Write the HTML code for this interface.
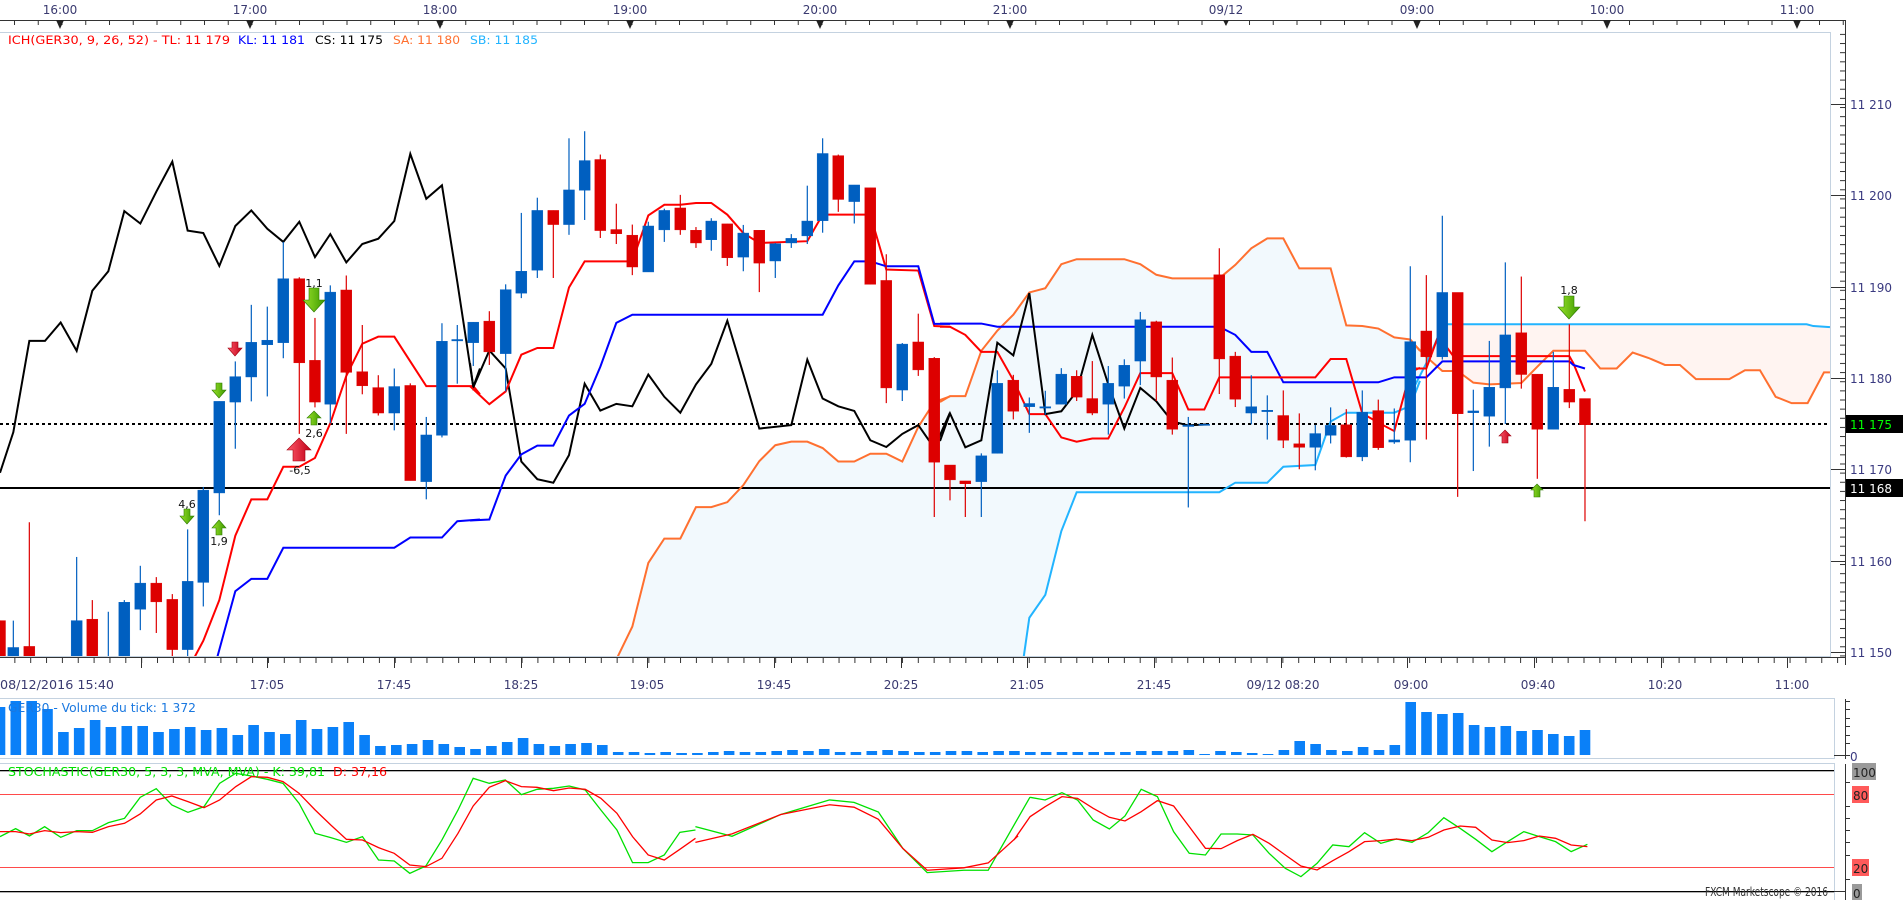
<!DOCTYPE html>
<html><head><meta charset="utf-8"><style>
html,body{margin:0;padding:0;background:#fff;}
svg{display:block;}
text{font-family:"DejaVu Sans","Liberation Sans",sans-serif;}
.ns{vector-effect:non-scaling-stroke;}
</style></head><body>
<svg width="1903" height="900" viewBox="0 0 1903 900" xmlns="http://www.w3.org/2000/svg">
<defs>
<pattern id="tt" x="14" y="0" width="23.75" height="900" patternUnits="userSpaceOnUse"><rect x="0" y="20" width="1" height="5" fill="#333"/></pattern>
<pattern id="bt" x="-1.5" y="0" width="15.85" height="900" patternUnits="userSpaceOnUse"><rect x="0" y="657" width="1" height="6" fill="#333"/></pattern>
<pattern id="rt" x="0" y="-2.66" width="20" height="9.14" patternUnits="userSpaceOnUse"><rect x="0" y="0" width="8" height="1" fill="#333"/></pattern>
<clipPath id="pc"><rect x="0" y="32" width="1830" height="625"/></clipPath>
<linearGradient id="gg" x1="0" y1="0" x2="1" y2="0"><stop offset="0" stop-color="#9be22a"/><stop offset="1" stop-color="#3c9a00"/></linearGradient>
<linearGradient id="rg" x1="0" y1="0" x2="1" y2="0"><stop offset="0" stop-color="#ff5a6a"/><stop offset="1" stop-color="#c00018"/></linearGradient>
</defs>

<rect x="0" y="20" width="1845" height="1" fill="#333"/>
<rect x="0" y="0" width="1845" height="26" fill="url(#tt)"/>
<g font-size="12" fill="#3a3a70" text-anchor="middle">
<text x="60" y="14">16:00</text><text x="250" y="14">17:00</text><text x="440" y="14">18:00</text><text x="630" y="14">19:00</text><text x="820" y="14">20:00</text><text x="1010" y="14">21:00</text><text x="1226" y="14">09/12</text><text x="1417" y="14">09:00</text><text x="1607" y="14">10:00</text><text x="1797" y="14">11:00</text>
</g>
<g fill="#222">
<polygon points="56,20 64,20 60,29"/><polygon points="246,20 254,20 250,29"/><polygon points="436,20 444,20 440,29"/><polygon points="626,20 634,20 630,29"/><polygon points="816,20 824,20 820,29"/><polygon points="1006,20 1014,20 1010,29"/><polygon points="1223,20 1229,20 1226,26"/><polygon points="1413,20 1421,20 1417,29"/><polygon points="1603,20 1611,20 1607,29"/><polygon points="1793,20 1801,20 1797,29"/>
</g>
<rect x="0" y="32" width="1830" height="1" fill="#c4d2e0"/>
<rect x="1830" y="32" width="1" height="625" fill="#c4d2e0"/>

<g clip-path="url(#pc)">
<g transform="translate(470,119.2) scale(0.3333,0.3536)">
<polygon fill="#f2f9fd" points="439,1528 487,1435 535,1255 583,1186 631,1186 678,1097 724,1097 772,1083 820,1035 868,967 916,922 964,912 1012,912 1058,930 1105,968 1153,968 1201,946 1249,946 1297,968 1345,870 1393,800 1440,784 1445,1600 439,1600"/>
</g>
<g transform="translate(940,119.2) scale(0.3333,0.3536)">
<polygon fill="#f2f9fd" points="0,800 30,783 76,783 124,655 172,598 220,553 268,490 316,478 364,410 410,396 553,396 601,410 649,440 697,450 838,450 886,412 934,365 982,337 1030,337 1078,422 1172,422 1219,583 1267,585 1315,592 1363,617 1411,623 1440,655 1440,740 1411,811 1363,830 1219,830 1172,855 1126,978 1030,983 982,1028 886,1028 838,1055 410,1055 364,1165 316,1345 268,1410 250,1600 0,1600"/>
</g>
<g transform="translate(1410,119.2) scale(0.3333,0.3536)">
<polygon fill="#f2f9fd" points="0,625 49,672 55,678 49,690 0,780"/>
<polygon fill="#fff4f1" points="55,678 82,620 97,580 1190,580 1210,585 1260,588 1260,716 1242,716 1193,803 1145,803 1097,785 1050,710 1005,710 958,735 858,735 810,695 765,695 715,675 668,660 620,705 571,705 525,655 430,655 382,700 334,746 238,750 190,745 143,712 97,712"/>
</g>

<line x1="0" y1="488" x2="1830" y2="488" stroke="#000" stroke-width="2"/>
<line x1="0" y1="424" x2="1830" y2="424" stroke="#000" stroke-width="2" stroke-dasharray="3,3"/>

<g transform="translate(0,119.2) scale(0.3333,0.3536)" fill="none" stroke-width="2">
<polyline class="ns" stroke="#000" points="0,1000 40,885 88,627 135,627 182,575 230,655 277,485 325,430 373,260 421,295 469,205 517,120 563,315 610,322 658,415 706,302 754,258 802,310 850,347 898,290 945,390 991,325 1039,405 1087,353 1135,338 1183,288 1231,98 1279,225 1326,187 1372,460 1420,757 1440,705"/>
<polyline class="ns" stroke="#ff0000" points="580,1528 610,1475 658,1360 706,1178 754,1075 802,1075 850,983 898,983 945,958 991,860 1039,726 1087,635 1135,615 1183,615 1231,685 1279,755 1326,755 1420,755 1440,778"/>
<polyline class="ns" stroke="#0000ff" points="650,1528 706,1335 754,1300 802,1300 850,1212 1183,1212 1231,1183 1326,1183 1372,1137 1440,1132"/>
</g>
<g transform="translate(470,119.2) scale(0.3333,0.3536)" fill="none" stroke-width="2">
<polyline class="ns" stroke="#ff7030" points="439,1528 487,1435 535,1255 583,1186 631,1186 678,1097 724,1097 772,1083 820,1035 868,967 916,922 964,912 1012,912 1058,930 1105,968 1153,968 1201,946 1249,946 1297,968 1345,870 1393,800 1440,784"/>
<polyline class="ns" stroke="#000" points="0,690 10,758 58,654 107,705 154,968 202,1018 250,1028 297,950 344,748 391,824 439,805 487,812 535,722 583,785 631,830 678,750 724,692 772,570 820,720 868,875 964,865 1012,680 1058,790 1105,812 1153,825 1201,908 1249,927 1297,890 1345,865 1393,930 1440,830"/>
<polyline class="ns" stroke="#ff0000" points="0,755 58,806 107,770 154,666 202,647 250,647 297,476 344,402 487,402 535,272 583,242 631,242 678,237 724,237 772,270 820,322 868,350 1012,345 1058,270 1201,270 1249,425 1345,428 1393,585 1440,587"/>
<polyline class="ns" stroke="#0000ff" points="0,1135 58,1132 107,1008 154,948 202,923 250,923 297,838 344,805 391,700 439,576 487,553 1058,553 1105,470 1153,402 1201,402 1249,416 1345,416 1393,579 1440,579"/>
</g>
<g transform="translate(940,119.2) scale(0.3333,0.3536)" fill="none" stroke-width="2">
<polyline class="ns" stroke="#ff7030" points="0,800 30,783 76,783 124,655 172,598 220,553 268,490 316,478 364,410 410,396 553,396 601,410 649,440 697,450 838,450 886,412 934,365 982,337 1030,337 1078,422 1172,422 1219,583 1267,585 1315,592 1363,617 1411,623 1440,655"/>
<polyline class="ns" stroke="#22b4ff" points="250,1528 268,1410 316,1345 364,1165 410,1055 838,1055 886,1028 982,1028 1030,983 1126,978 1172,855 1219,830 1363,830 1411,811 1440,740"/>
<polyline class="ns" stroke="#0000ff" points="0,578 124,578 172,587 838,587 886,610 934,658 982,658 1030,744 1315,744 1363,730 1440,730"/>
<polyline class="ns" stroke="#ff0000" points="0,587 30,587 76,610 124,658 172,658 220,738 268,834 316,834 364,900 410,912 457,903 505,903 553,816 601,718 697,718 745,821 793,821 838,730 1126,730 1172,678 1219,678 1267,832 1315,858 1363,882 1411,715 1440,703"/>
<polyline class="ns" stroke="#000" points="0,910 30,832 76,928 124,908 172,632 220,668 268,492 316,834 364,826 410,770 457,610 505,750 553,875 601,760 649,798 697,855 745,866 800,863"/>
</g>
<g transform="translate(1410,119.2) scale(0.3333,0.3536)" fill="none" stroke-width="2">
<polyline class="ns" stroke="#ff7030" points="0,625 49,672 97,712 143,712 190,745 238,750 334,746 382,700 430,655 525,655 571,705 620,705 668,660 715,675 765,695 810,695 858,735 958,735 1005,710 1050,710 1097,785 1145,803 1193,803 1242,716 1260,716"/>
<polyline class="ns" stroke="#22b4ff" points="0,780 49,690 82,620 97,580 1190,580 1210,585 1260,588"/>
<polyline class="ns" stroke="#ff0000" points="0,705 49,705 82,620 97,628 130,670 478,670 490,690 525,770"/>
<polyline class="ns" stroke="#0000ff" points="0,730 49,730 97,685 478,685 490,695 525,705"/>
</g>

<g transform="translate(0,119.2) scale(0.3333,0.3536)">
<g stroke="#dd0000" fill="#dd0000" stroke-width="1.2">
<line class="ns" x1="0" y1="1418" x2="0" y2="1528"/><rect x="-16.5" y="1418" width="33" height="110"/>
<line class="ns" x1="88" y1="1140" x2="88" y2="1528"/><rect x="71.5" y="1491" width="33" height="37"/>
<line class="ns" x1="277" y1="1360" x2="277" y2="1528"/><rect x="260.5" y="1414" width="33" height="114"/>
<line class="ns" x1="469" y1="1295" x2="469" y2="1453"/><rect x="452.5" y="1312" width="33" height="53"/>
<line class="ns" x1="517" y1="1343" x2="517" y2="1528"/><rect x="500.5" y="1358" width="33" height="142"/>
<line class="ns" x1="898" y1="447" x2="898" y2="890"/><rect x="881.5" y="451" width="33" height="238"/>
<line class="ns" x1="945" y1="562" x2="945" y2="815"/><rect x="928.5" y="682" width="33" height="118"/>
<line class="ns" x1="1039" y1="442" x2="1039" y2="890"/><rect x="1022.5" y="483" width="33" height="233"/>
<line class="ns" x1="1087" y1="582" x2="1087" y2="778"/><rect x="1070.5" y="714" width="33" height="40"/>
<line class="ns" x1="1135" y1="724" x2="1135" y2="838"/><rect x="1118.5" y="759" width="33" height="72"/>
<line class="ns" x1="1231" y1="747" x2="1231" y2="1022"/><rect x="1214.5" y="753" width="33" height="269"/>
</g>
<g stroke="#005fc0" fill="#005fc0" stroke-width="1.2">
<line class="ns" x1="40" y1="1418" x2="40" y2="1528"/><rect x="23.5" y="1494" width="33" height="34"/>
<line class="ns" x1="230" y1="1238" x2="230" y2="1528"/><rect x="213.5" y="1418" width="33" height="110"/>
<line class="ns" x1="325" y1="1393" x2="325" y2="1528"/>
<line class="ns" x1="373" y1="1360" x2="373" y2="1528"/><rect x="356.5" y="1366" width="33" height="162"/>
<line class="ns" x1="421" y1="1263" x2="421" y2="1445"/><rect x="404.5" y="1312" width="33" height="74"/>
<line class="ns" x1="563" y1="1160" x2="563" y2="1528"/><rect x="546.5" y="1307" width="33" height="193"/>
<line class="ns" x1="610" y1="1040" x2="610" y2="1378"/><rect x="593.5" y="1049" width="33" height="261"/>
<line class="ns" x1="658" y1="798" x2="658" y2="1120"/><rect x="641.5" y="798" width="33" height="259"/>
<line class="ns" x1="706" y1="685" x2="706" y2="932"/><rect x="689.5" y="728" width="33" height="72"/>
<line class="ns" x1="754" y1="525" x2="754" y2="798"/><rect x="737.5" y="631" width="33" height="98"/>
<line class="ns" x1="802" y1="530" x2="802" y2="784"/><rect x="785.5" y="625" width="33" height="13"/>
<line class="ns" x1="850" y1="347" x2="850" y2="676"/><rect x="833.5" y="451" width="33" height="181"/>
<line class="ns" x1="991" y1="470" x2="991" y2="860"/><rect x="974.5" y="489" width="33" height="317"/>
<line class="ns" x1="1183" y1="705" x2="1183" y2="880"/><rect x="1166.5" y="756" width="33" height="75"/>
<line class="ns" x1="1279" y1="842" x2="1279" y2="1075"/><rect x="1262.5" y="893" width="33" height="132"/>
<line class="ns" x1="1326" y1="577" x2="1326" y2="900"/><rect x="1309.5" y="628" width="33" height="266"/>
<line class="ns" x1="1372" y1="582" x2="1372" y2="748"/><rect x="1355.5" y="623" width="33" height="4"/>
<line class="ns" x1="1420" y1="574" x2="1420" y2="698"/><rect x="1403.5" y="574" width="33" height="58"/>
</g>
</g>
<g transform="translate(470,119.2) scale(0.3333,0.3536)">
<g stroke="#dd0000" fill="#dd0000" stroke-width="1.2">
<line class="ns" x1="58" y1="543" x2="58" y2="695"/><rect x="41.5" y="571" width="33" height="87"/>
<line class="ns" x1="250" y1="258" x2="250" y2="449"/><rect x="233.5" y="258" width="33" height="40"/>
<line class="ns" x1="391" y1="100" x2="391" y2="336"/><rect x="374.5" y="114" width="33" height="201"/>
<line class="ns" x1="439" y1="239" x2="439" y2="353"/><rect x="422.5" y="312" width="33" height="12"/>
<line class="ns" x1="487" y1="298" x2="487" y2="441"/><rect x="470.5" y="328" width="33" height="90"/>
<line class="ns" x1="631" y1="214" x2="631" y2="327"/><rect x="614.5" y="251" width="33" height="62"/>
<line class="ns" x1="678" y1="305" x2="678" y2="364"/><rect x="661.5" y="314" width="33" height="36"/>
<line class="ns" x1="772" y1="296" x2="772" y2="415"/><rect x="755.5" y="296" width="33" height="96"/>
<line class="ns" x1="868" y1="314" x2="868" y2="489"/><rect x="851.5" y="314" width="33" height="93"/>
<line class="ns" x1="1105" y1="100" x2="1105" y2="262"/><rect x="1088.5" y="103" width="33" height="124"/>
<line class="ns" x1="1201" y1="194" x2="1201" y2="467"/><rect x="1184.5" y="194" width="33" height="273"/>
<line class="ns" x1="1249" y1="382" x2="1249" y2="803"/><rect x="1232.5" y="456" width="33" height="304"/>
<line class="ns" x1="1345" y1="550" x2="1345" y2="726"/><rect x="1328.5" y="630" width="33" height="79"/>
<line class="ns" x1="1393" y1="673" x2="1393" y2="1125"/><rect x="1376.5" y="676" width="33" height="294"/>
</g>
<g stroke="#005fc0" fill="#005fc0" stroke-width="1.2">
<line class="ns" x1="107" y1="467" x2="107" y2="770"/><rect x="90.5" y="482" width="33" height="181"/>
<line class="ns" x1="154" y1="265" x2="154" y2="506"/><rect x="137.5" y="430" width="33" height="62"/>
<line class="ns" x1="202" y1="222" x2="202" y2="449"/><rect x="185.5" y="258" width="33" height="169"/>
<line class="ns" x1="297" y1="54" x2="297" y2="327"/><rect x="280.5" y="200" width="33" height="98"/>
<line class="ns" x1="344" y1="34" x2="344" y2="285"/><rect x="327.5" y="117" width="33" height="84"/>
<line class="ns" x1="535" y1="290" x2="535" y2="432"/><rect x="518.5" y="302" width="33" height="130"/>
<line class="ns" x1="583" y1="253" x2="583" y2="347"/><rect x="566.5" y="258" width="33" height="55"/>
<line class="ns" x1="724" y1="280" x2="724" y2="372"/><rect x="707.5" y="288" width="33" height="53"/>
<line class="ns" x1="820" y1="299" x2="820" y2="430"/><rect x="803.5" y="322" width="33" height="68"/>
<line class="ns" x1="916" y1="350" x2="916" y2="449"/><rect x="899.5" y="352" width="33" height="49"/>
<line class="ns" x1="964" y1="325" x2="964" y2="364"/><rect x="947.5" y="337" width="33" height="13"/>
<line class="ns" x1="1012" y1="188" x2="1012" y2="353"/><rect x="995.5" y="288" width="33" height="42"/>
<line class="ns" x1="1058" y1="54" x2="1058" y2="321"/><rect x="1041.5" y="97" width="33" height="190"/>
<line class="ns" x1="1153" y1="186" x2="1153" y2="295"/><rect x="1136.5" y="186" width="33" height="47"/>
<line class="ns" x1="1297" y1="633" x2="1297" y2="797"/><rect x="1280.5" y="636" width="33" height="130"/>
</g>
</g>
<g transform="translate(940,119.2) scale(0.3333,0.3536)">
<g stroke="#dd0000" fill="#dd0000" stroke-width="1.2">
<line class="ns" x1="30" y1="978" x2="30" y2="1078"/><rect x="13.5" y="978" width="33" height="42"/>
<line class="ns" x1="76" y1="1023" x2="76" y2="1125"/><rect x="59.5" y="1023" width="33" height="8"/>
<line class="ns" x1="220" y1="723" x2="220" y2="849"/><rect x="203.5" y="738" width="33" height="88"/>
<line class="ns" x1="410" y1="710" x2="410" y2="797"/><rect x="393.5" y="727" width="33" height="59"/>
<line class="ns" x1="457" y1="684" x2="457" y2="837"/><rect x="440.5" y="790" width="33" height="41"/>
<line class="ns" x1="649" y1="570" x2="649" y2="797"/><rect x="632.5" y="573" width="33" height="156"/>
<line class="ns" x1="697" y1="674" x2="697" y2="892"/><rect x="680.5" y="738" width="33" height="139"/>
<line class="ns" x1="838" y1="365" x2="838" y2="777"/><rect x="821.5" y="440" width="33" height="238"/>
<line class="ns" x1="886" y1="658" x2="886" y2="814"/><rect x="869.5" y="670" width="33" height="122"/>
<line class="ns" x1="1030" y1="767" x2="1030" y2="930"/><rect x="1013.5" y="838" width="33" height="70"/>
<line class="ns" x1="1078" y1="832" x2="1078" y2="990"/><rect x="1061.5" y="918" width="33" height="10"/>
<line class="ns" x1="1219" y1="820" x2="1219" y2="957"/><rect x="1202.5" y="864" width="33" height="91"/>
<line class="ns" x1="1315" y1="793" x2="1315" y2="935"/><rect x="1298.5" y="824" width="33" height="105"/>
</g>
<g stroke="#005fc0" fill="#005fc0" stroke-width="1.2">
<line class="ns" x1="124" y1="945" x2="124" y2="1125"/><rect x="107.5" y="952" width="33" height="73"/>
<line class="ns" x1="172" y1="710" x2="172" y2="945"/><rect x="155.5" y="747" width="33" height="198"/>
<line class="ns" x1="268" y1="787" x2="268" y2="887"/><rect x="251.5" y="804" width="33" height="9"/>
<line class="ns" x1="316" y1="768" x2="316" y2="836"/><rect x="299.5" y="813" width="33" height="4"/>
<line class="ns" x1="364" y1="704" x2="364" y2="806"/><rect x="347.5" y="721" width="33" height="85"/>
<line class="ns" x1="505" y1="698" x2="505" y2="892"/><rect x="488.5" y="747" width="33" height="59"/>
<line class="ns" x1="553" y1="679" x2="553" y2="790"/><rect x="536.5" y="696" width="33" height="59"/>
<line class="ns" x1="601" y1="545" x2="601" y2="752"/><rect x="584.5" y="567" width="33" height="117"/>
<line class="ns" x1="745" y1="842" x2="745" y2="1098"/><rect x="728.5" y="865" width="33" height="4"/>
<rect x="776.5" y="863" width="33" height="3"/>
<line class="ns" x1="934" y1="724" x2="934" y2="863"/><rect x="917.5" y="813" width="33" height="18"/>
<line class="ns" x1="982" y1="781" x2="982" y2="906"/><rect x="965.5" y="823" width="33" height="4"/>
<line class="ns" x1="1126" y1="865" x2="1126" y2="993"/><rect x="1109.5" y="889" width="33" height="39"/>
<line class="ns" x1="1172" y1="815" x2="1172" y2="917"/><rect x="1155.5" y="866" width="33" height="28"/>
<line class="ns" x1="1267" y1="767" x2="1267" y2="967"/><rect x="1250.5" y="829" width="33" height="126"/>
<line class="ns" x1="1363" y1="818" x2="1363" y2="918"/><rect x="1346.5" y="907" width="33" height="6"/>
<line class="ns" x1="1411" y1="416" x2="1411" y2="970"/><rect x="1394.5" y="629" width="33" height="279"/>
</g>
</g>
<g transform="translate(1410,119.2) scale(0.3333,0.3536)">
<g stroke="#dd0000" fill="#dd0000" stroke-width="1.2">
<line class="ns" x1="49" y1="441" x2="49" y2="906"/><rect x="32.5" y="599" width="33" height="73"/>
<line class="ns" x1="143" y1="490" x2="143" y2="1068"/><rect x="126.5" y="490" width="33" height="343"/>
<line class="ns" x1="334" y1="445" x2="334" y2="762"/><rect x="317.5" y="604" width="33" height="118"/>
<line class="ns" x1="382" y1="721" x2="382" y2="1017"/><rect x="365.5" y="721" width="33" height="156"/>
<line class="ns" x1="478" y1="580" x2="478" y2="817"/><rect x="461.5" y="764" width="33" height="36"/>
<line class="ns" x1="525" y1="790" x2="525" y2="1137"/><rect x="508.5" y="790" width="33" height="74"/>
</g>
<g stroke="#005fc0" fill="#005fc0" stroke-width="1.2">
<line class="ns" x1="97" y1="273" x2="97" y2="680"/><rect x="80.5" y="490" width="33" height="182"/>
<line class="ns" x1="190" y1="765" x2="190" y2="995"/><rect x="173.5" y="825" width="33" height="5"/>
<line class="ns" x1="238" y1="627" x2="238" y2="926"/><rect x="221.5" y="758" width="33" height="82"/>
<line class="ns" x1="286" y1="405" x2="286" y2="862"/><rect x="269.5" y="610" width="33" height="150"/>
<line class="ns" x1="430" y1="658" x2="430" y2="877"/><rect x="413.5" y="758" width="33" height="119"/>
</g>
</g>

<g stroke-width="0.6">
<polygon fill="url(#gg)" stroke="#2e7a00" points="184,509 190,509 190,516 194,516 187,524 180,516 184,516"/>
<polygon fill="url(#gg)" stroke="#2e7a00" points="216,383 222,383 222,390 226,390 219,398 212,390 216,390"/>
<polygon fill="url(#gg)" stroke="#2e7a00" points="219,520 226,528 222,528 222,535 216,535 216,528 212,528"/>
<polygon fill="url(#rg)" stroke="#a00010" points="232,342 238,342 238,348 242,348 235,356 228,348 232,348"/>
<polygon fill="url(#gg)" stroke="#2e7a00" points="309,288 319,288 319,300 325,300 314,312 303,300 309,300"/>
<polygon fill="url(#gg)" stroke="#2e7a00" points="314,411 321,418 317,418 317,425 311,425 311,418 307,418"/>
<polygon fill="url(#rg)" stroke="#a00010" points="299,438 311,450 305,450 305,461 293,461 293,450 287,450"/>
<polygon fill="url(#gg)" stroke="#2e7a00" points="1564,296 1574,296 1574,307 1580,307 1569,319 1558,307 1564,307"/>
<polygon fill="url(#rg)" stroke="#a00010" points="1505,430 1511,436 1508,436 1508,443 1502,443 1502,436 1499,436"/>
<polygon fill="url(#gg)" stroke="#2e7a00" points="1537,484 1543,490 1540,490 1540,497 1534,497 1534,490 1531,490"/>
</g>
<g font-size="11" fill="#111" text-anchor="middle">
<text x="187" y="508">4,6</text>
<text x="219" y="545">1,9</text>
<text x="314" y="287">1,1</text>
<text x="314" y="437">2,6</text>
<text x="300" y="474">-6,5</text>
<text x="1569" y="294">1,8</text>
</g>
</g>

<g font-size="11.5">
<text x="8" y="44" fill="#ff0000" textLength="222" lengthAdjust="spacingAndGlyphs">ICH(GER30, 9, 26, 52) -  TL: 11 179</text>
<text x="238" y="44" fill="#0000ff" textLength="67" lengthAdjust="spacingAndGlyphs">KL: 11 181</text>
<text x="315" y="44" fill="#000" textLength="68" lengthAdjust="spacingAndGlyphs">CS: 11 175</text>
<text x="393" y="44" fill="#ff7030" textLength="67" lengthAdjust="spacingAndGlyphs">SA: 11 180</text>
<text x="470" y="44" fill="#22b4ff" textLength="68" lengthAdjust="spacingAndGlyphs">SB: 11 185</text>
</g>

<rect x="1845" y="20" width="1" height="645" fill="#333"/>
<rect x="1838" y="32" width="8" height="630" fill="url(#rt)"/>
<g fill="#333">
<rect x="1831" y="104" width="15" height="1"/><rect x="1831" y="195" width="15" height="1"/><rect x="1831" y="287" width="15" height="1"/><rect x="1831" y="378" width="15" height="1"/><rect x="1831" y="469" width="15" height="1"/><rect x="1831" y="561" width="15" height="1"/><rect x="1831" y="652" width="15" height="1"/>
</g>
<g font-size="12" fill="#3a3a80">
<text x="1850" y="109">11 210</text><text x="1850" y="200">11 200</text><text x="1850" y="292">11 190</text><text x="1850" y="383">11 180</text><text x="1850" y="474">11 170</text><text x="1850" y="566">11 160</text><text x="1850" y="657">11 150</text>
</g>
<rect x="1846" y="415" width="57" height="18" fill="#000"/>
<text x="1850" y="429" font-size="12" fill="#00ff00">11 175</text>
<rect x="1846" y="479" width="57" height="18" fill="#000"/>
<text x="1850" y="493" font-size="12" fill="#fff">11 168</text>

<rect x="0" y="656" width="1830" height="1" fill="#c4d2e0"/>
<rect x="0" y="657" width="1845" height="1" fill="#333"/>
<rect x="0" y="657" width="1845" height="8" fill="url(#bt)"/>
<g fill="#333">
<rect x="141" y="657" width="1" height="11"/><rect x="267" y="657" width="1" height="11"/><rect x="394" y="657" width="1" height="11"/><rect x="521" y="657" width="1" height="11"/><rect x="647" y="657" width="1" height="11"/><rect x="774" y="657" width="1" height="11"/><rect x="901" y="657" width="1" height="11"/><rect x="1027" y="657" width="1" height="11"/><rect x="1154" y="657" width="1" height="11"/><rect x="1281" y="657" width="1" height="11"/><rect x="1407" y="657" width="1" height="11"/><rect x="1534" y="657" width="1" height="11"/><rect x="1661" y="657" width="1" height="11"/><rect x="1787" y="657" width="1" height="11"/>
</g>
<g font-size="12" fill="#3a3a70" text-anchor="middle">
<text x="0" y="689" text-anchor="start" textLength="114" lengthAdjust="spacingAndGlyphs">08/12/2016 15:40</text>
<text x="267" y="689">17:05</text><text x="394" y="689">17:45</text><text x="521" y="689">18:25</text><text x="647" y="689">19:05</text><text x="774" y="689">19:45</text><text x="901" y="689">20:25</text><text x="1027" y="689">21:05</text><text x="1154" y="689">21:45</text><text x="1283" y="689">09/12 08:20</text><text x="1411" y="689">09:00</text><text x="1538" y="689">09:40</text><text x="1665" y="689">10:20</text><text x="1792" y="689">11:00</text>
</g>

<rect x="0" y="698" width="1834" height="1" fill="#c4d2e0"/>
<rect x="0" y="758" width="1834" height="1" fill="#c4d2e0"/>
<rect x="1834" y="698" width="1" height="61" fill="#c4d2e0"/>
<g fill="#0a80f8">
<rect x="-5.3" y="707" width="10.6" height="48"/><rect x="10.5" y="701" width="10.6" height="54"/><rect x="26.4" y="701" width="10.6" height="54"/><rect x="42.2" y="709" width="10.6" height="46"/><rect x="58.1" y="732" width="10.6" height="23"/><rect x="73.9" y="728" width="10.6" height="27"/><rect x="89.8" y="720" width="10.6" height="35"/><rect x="105.6" y="727" width="10.6" height="28"/><rect x="121.5" y="726" width="10.6" height="29"/><rect x="137.4" y="726" width="10.6" height="29"/><rect x="153.2" y="732" width="10.6" height="23"/><rect x="169.1" y="729" width="10.6" height="26"/><rect x="184.9" y="727" width="10.6" height="28"/><rect x="200.8" y="730" width="10.6" height="25"/><rect x="216.6" y="728" width="10.6" height="27"/><rect x="232.5" y="735" width="10.6" height="20"/><rect x="248.3" y="725" width="10.6" height="30"/><rect x="264.2" y="732" width="10.6" height="23"/><rect x="280" y="734" width="10.6" height="21"/><rect x="295.9" y="720" width="10.6" height="35"/><rect x="311.7" y="729" width="10.6" height="26"/><rect x="327.6" y="727" width="10.6" height="28"/><rect x="343.4" y="722" width="10.6" height="33"/><rect x="359.3" y="735" width="10.6" height="20"/><rect x="375.1" y="746" width="10.6" height="9"/><rect x="391" y="745" width="10.6" height="10"/><rect x="406.8" y="744" width="10.6" height="11"/><rect x="422.7" y="740" width="10.6" height="15"/><rect x="438.5" y="744" width="10.6" height="11"/><rect x="454.4" y="747" width="10.6" height="8"/><rect x="470.2" y="749" width="10.6" height="6"/><rect x="486.1" y="746" width="10.6" height="9"/><rect x="501.9" y="742" width="10.6" height="13"/><rect x="517.8" y="738" width="10.6" height="17"/><rect x="533.6" y="744" width="10.6" height="11"/><rect x="549.5" y="746" width="10.6" height="9"/><rect x="565.3" y="744" width="10.6" height="11"/><rect x="581.2" y="743" width="10.6" height="12"/><rect x="597" y="745" width="10.6" height="10"/><rect x="612.9" y="752" width="10.6" height="3"/><rect x="628.7" y="752" width="10.6" height="3"/><rect x="644.6" y="753" width="10.6" height="2"/><rect x="660.4" y="752" width="10.6" height="3"/><rect x="676.3" y="753" width="10.6" height="2"/><rect x="692.1" y="753" width="10.6" height="2"/>
<rect x="708" y="752" width="10.6" height="3"/><rect x="723.8" y="751" width="10.6" height="4"/><rect x="739.7" y="752" width="10.6" height="3"/><rect x="755.5" y="752" width="10.6" height="3"/><rect x="771.4" y="751" width="10.6" height="4"/><rect x="787.2" y="750" width="10.6" height="5"/><rect x="803.1" y="751" width="10.6" height="4"/><rect x="818.9" y="749" width="10.6" height="6"/><rect x="834.8" y="752" width="10.6" height="3"/><rect x="850.6" y="752" width="10.6" height="3"/><rect x="866.5" y="751" width="10.6" height="4"/><rect x="882.3" y="750" width="10.6" height="5"/><rect x="898.2" y="751" width="10.6" height="4"/><rect x="914" y="752" width="10.6" height="3"/><rect x="929.9" y="752" width="10.6" height="3"/><rect x="945.7" y="751" width="10.6" height="4"/><rect x="961.6" y="751" width="10.6" height="4"/><rect x="977.4" y="752" width="10.6" height="3"/><rect x="993.3" y="751" width="10.6" height="4"/><rect x="1009.1" y="751" width="10.6" height="4"/><rect x="1025" y="752" width="10.6" height="3"/><rect x="1040.8" y="752" width="10.6" height="3"/><rect x="1056.7" y="752" width="10.6" height="3"/><rect x="1072.5" y="752" width="10.6" height="3"/><rect x="1088.4" y="752" width="10.6" height="3"/><rect x="1104.2" y="752" width="10.6" height="3"/><rect x="1120.1" y="752" width="10.6" height="3"/><rect x="1135.9" y="751" width="10.6" height="4"/><rect x="1151.8" y="751" width="10.6" height="4"/><rect x="1167.6" y="751" width="10.6" height="4"/><rect x="1183.5" y="750" width="10.6" height="5"/><rect x="1199.3" y="754" width="10.6" height="1"/><rect x="1215.2" y="751" width="10.6" height="4"/><rect x="1231" y="752" width="10.6" height="3"/><rect x="1246.9" y="753" width="10.6" height="2"/><rect x="1262.7" y="754" width="10.6" height="1"/><rect x="1278.6" y="750" width="10.6" height="5"/><rect x="1294.4" y="741" width="10.6" height="14"/><rect x="1310.3" y="744" width="10.6" height="11"/><rect x="1326.1" y="750" width="10.6" height="5"/><rect x="1342" y="751" width="10.6" height="4"/><rect x="1357.8" y="747" width="10.6" height="8"/><rect x="1373.7" y="750" width="10.6" height="5"/><rect x="1389.5" y="745" width="10.6" height="10"/><rect x="1405.4" y="702" width="10.6" height="53"/><rect x="1421.2" y="712" width="10.6" height="43"/><rect x="1437.1" y="714" width="10.6" height="41"/><rect x="1452.9" y="713" width="10.6" height="42"/><rect x="1468.8" y="725" width="10.6" height="30"/><rect x="1484.6" y="727" width="10.6" height="28"/><rect x="1500.5" y="726" width="10.6" height="29"/><rect x="1516.3" y="731" width="10.6" height="24"/><rect x="1532.2" y="730" width="10.6" height="25"/><rect x="1548" y="734" width="10.6" height="21"/><rect x="1563.9" y="736" width="10.6" height="19"/><rect x="1579.7" y="730" width="10.6" height="25"/>
</g>
<text x="8" y="712" font-size="12" fill="#1a78e0" textLength="188" lengthAdjust="spacingAndGlyphs">GER30 - Volume du tick: 1 372</text>
<rect x="1845" y="699" width="1" height="60" fill="#333"/>
<g fill="#333"><rect x="1845" y="701" width="5" height="1"/><rect x="1845" y="709" width="5" height="1"/><rect x="1845" y="718" width="5" height="1"/><rect x="1845" y="726" width="5" height="1"/><rect x="1845" y="735" width="5" height="1"/><rect x="1845" y="743" width="5" height="1"/><rect x="1845" y="755" width="5" height="1"/><rect x="1834" y="755" width="11" height="1"/></g>
<text x="1850" y="761" font-size="12" fill="#3a3a80">0</text>

<rect x="0" y="763" width="1834" height="1" fill="#c4d2e0"/>
<rect x="1834" y="763" width="1" height="137" fill="#c4d2e0"/>
<rect x="0" y="770" width="1834" height="1.3" fill="#000"/>
<rect x="0" y="794" width="1834" height="1" fill="#ff4a4a"/>
<rect x="0" y="867" width="1834" height="1" fill="#ff4a4a"/>
<rect x="0" y="891" width="1834" height="1.3" fill="#000"/>
<g transform="translate(0,640) scale(0.4464,0.3333)" fill="none" stroke-width="1.3">
<polyline class="ns" stroke="#00e000" points="0,590 35,566 66,588 100,560 136,592 172,572 207,572 243,548 279,535 314,472 350,446 385,495 421,517 457,500 492,430 528,400 563,408 599,418 634,430 670,490 706,580 741,593 776,607 812,590 848,660 883,663 918,700 954,678 990,600 1026,510 1060,415 1096,430 1132,420 1168,464 1203,448 1240,445 1275,438 1311,450 1346,510 1382,570 1417,668 1452,668 1488,645 1523,577 1558,570"/>
<polyline class="ns" stroke="#ff0000" points="0,575 35,575 66,582 100,572 136,578 172,575 207,577 243,560 279,550 314,522 350,480 385,468 421,485 457,503 492,480 528,440 563,410 599,412 634,425 670,460 706,510 741,555 776,598 812,600 848,623 883,640 918,675 954,680 990,655 1026,580 1060,498 1096,442 1132,422 1168,440 1203,442 1240,452 1275,444 1311,448 1346,475 1382,520 1417,590 1452,645 1488,660 1523,628 1558,595"/>
</g>
<g transform="scale(1.22,1.212)" fill="none" stroke-width="1.3">
<polyline class="ns" stroke="#00e000" points="570,682 600,690 640,672 680,660 700,662 720,670 740,700 760,720 790,718 810,718 844.3,657.6"/>
<polyline class="ns" stroke="#ff0000" points="570,695 600,688 640,672 680,664 700,666 720,676 740,700 760,718 790,716 810,712 834.5,689.7"/>
</g>
<g transform="translate(1000,650) scale(0.5787,0.3333)" fill="none" stroke-width="1.3">
<polyline class="ns" stroke="#00e000" points="52,442 78,450 107,428 134,450 161,510 189,537 216,498 244,418 272,440 300,545 327,610 355,615 382,552 410,552 437,555 465,610 493,655 520,680 548,640 575,585 603,590 630,548 658,580 685,567 712,577 740,548 767,503 795,535 822,568 850,605 877,575 905,545 932,560 960,575 987,605 1015,583"/>
<polyline class="ns" stroke="#ff0000" points="24,570 52,500 78,470 107,440 134,445 161,475 189,502 216,513 244,485 272,452 300,468 327,530 355,595 382,596 410,572 437,553 465,580 493,615 520,648 548,660 575,632 603,605 630,575 658,572 685,567 712,572 740,562 767,540 795,528 822,532 850,570 877,578 905,572 932,558 960,565 987,585 1015,590"/>
</g>
<text x="8" y="776" font-size="12" fill="#00e000" textLength="317" lengthAdjust="spacingAndGlyphs">STOCHASTIC(GER30, 5, 3, 3, MVA, MVA) -  K: 39,81</text>
<text x="333" y="776" font-size="12" fill="#ff0000" textLength="54" lengthAdjust="spacingAndGlyphs">D: 37,16</text>
<rect x="1845" y="764" width="1" height="136" fill="#333"/>
<g fill="#333"><rect x="1845" y="782" width="5" height="1"/><rect x="1845" y="806" width="5" height="1"/><rect x="1845" y="818" width="5" height="1"/><rect x="1845" y="830" width="5" height="1"/><rect x="1845" y="842" width="5" height="1"/><rect x="1845" y="855" width="5" height="1"/><rect x="1845" y="879" width="5" height="1"/><rect x="1834" y="891" width="11" height="1"/></g>
<rect x="1852" y="763" width="24" height="17" fill="#9a9a9a"/>
<text x="1853" y="777" font-size="12" fill="#222">100</text>
<rect x="1852" y="786" width="17" height="17" fill="#ff5a5a"/>
<text x="1853" y="800" font-size="12" fill="#222">80</text>
<rect x="1852" y="859" width="17" height="17" fill="#ff5a5a"/>
<text x="1853" y="873" font-size="12" fill="#222">20</text>
<rect x="1852" y="884" width="10" height="16" fill="#9a9a9a"/>
<text x="1853" y="898" font-size="12" fill="#222">0</text>
<text x="1828" y="896" font-size="12" fill="#333" text-anchor="end" textLength="123" lengthAdjust="spacingAndGlyphs">FXCM Marketscope © 2016</text>
</svg>
</body></html>
